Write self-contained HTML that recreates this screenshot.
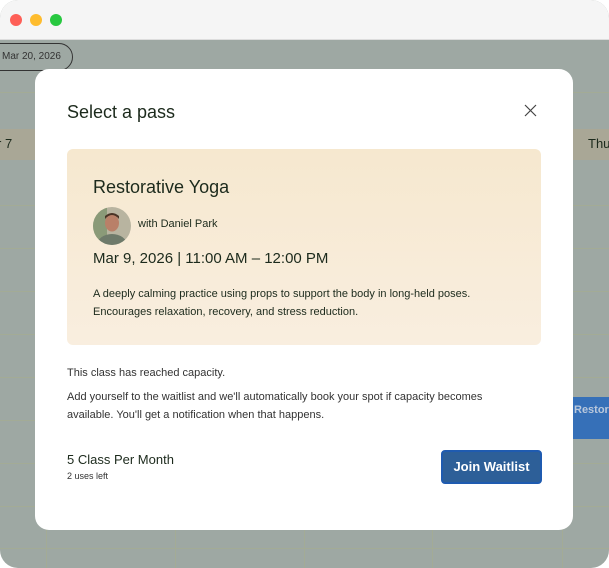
<!DOCTYPE html>
<html><head><meta charset="utf-8"><style>
*{box-sizing:border-box;margin:0;padding:0}
body{width:609px;height:568px;overflow:hidden;background:#fff;font-family:"Liberation Sans",sans-serif;position:relative}
.win{position:absolute;inset:0;border-radius:18px;overflow:hidden;background:#9ea8a3}
.top{position:absolute;left:0;top:0;width:609px;height:40px;background:#f5f5f5;border-bottom:1px solid #ddd}
.dot{position:absolute;top:14px;width:12px;height:12px;border-radius:50%}
.hl{position:absolute;left:0;width:609px;height:1px;background:#a3ab96}
.vl{position:absolute;top:506px;height:62px;width:1px;background:#a3ab96}
.band{position:absolute;left:0;top:129px;width:609px;height:31px;background:#a9a796}
.pill{position:absolute;left:-20px;top:43px;width:93px;height:28px;border:1px solid #333;border-radius:14px;font-size:10px;color:#333;line-height:26px;padding-left:21px}
.modal{position:absolute;left:35px;top:69px;width:538px;height:461px;background:#fff;border-radius:14px}
.card{position:absolute;left:32px;top:80px;width:474px;height:196px;border-radius:6px;background:linear-gradient(180deg,#f6e8cf,#f9eedf)}
.t{position:absolute;white-space:nowrap;color:#1c2a1c}
.btn{position:absolute;left:406px;top:381px;width:101px;height:34px;background:#2d5f98;border:2px solid #1f5bb0;border-radius:4px;color:#fff;font-size:13px;font-weight:bold;text-align:center;line-height:30px}
</style></head><body>
<div class="win">
<div class="top"></div>
<div class="dot" style="left:10px;background:#fe5f57"></div>
<div class="dot" style="left:30px;background:#febc2e"></div>
<div class="dot" style="left:50px;background:#28c840"></div>
<div class="pill">Mar 20, 2026</div>
<div class="hl" style="top:92px"></div>
<div class="band"></div>
<div class="t" style="left:-3px;top:136px;font-size:13px">r 7</div>
<div class="t" style="left:588px;top:136px;font-size:13px">Thu</div>
<div class="hl" style="top:205px"></div><div class="hl" style="top:248px"></div><div class="hl" style="top:291px"></div><div class="hl" style="top:334px"></div><div class="hl" style="top:377px"></div><div class="hl" style="top:420px"></div><div class="hl" style="top:463px"></div><div class="hl" style="top:506px"></div><div class="hl" style="top:548px"></div>
<div class="vl" style="left:46px"></div><div class="vl" style="left:175px"></div><div class="vl" style="left:304px"></div><div class="vl" style="left:432px"></div><div class="vl" style="left:562px"></div>
<div style="position:absolute;left:570px;top:397px;width:39px;height:42px;background:#3670b8;color:#b9c8dc;font-size:11px;font-weight:bold;padding:7px 0 0 4px;white-space:nowrap;overflow:hidden">Restor</div>
<div class="modal">
<div class="t" style="left:32px;top:33px;font-size:18px">Select a pass</div>
<svg style="position:absolute;left:489px;top:35px" width="13" height="13" viewBox="0 0 13 13"><path d="M1 1L12 12M12 1L1 12" stroke="#444" stroke-width="1.2"/></svg>
<div class="card">
<div class="t" style="left:26px;top:28px;font-size:18px">Restorative Yoga</div>
<svg style="position:absolute;left:26px;top:58px" width="38" height="38" viewBox="0 0 38 38"><defs><clipPath id="c"><circle cx="19" cy="19" r="19"/></clipPath></defs><g clip-path="url(#c)"><rect width="38" height="38" fill="#b8b4a0"/><rect x="0" y="0" width="14" height="38" fill="#8a9a78"/><ellipse cx="19" cy="38" rx="15" ry="11" fill="#6e7a6a"/><ellipse cx="19" cy="16" rx="7" ry="8.5" fill="#b98068"/><path d="M12 12Q19 4 26 12L26 9Q19 3 12 9Z" fill="#4a3426"/></g></svg>
<div class="t" style="left:71px;top:69px;font-size:11px">with Daniel Park</div>
<div class="t" style="left:26px;top:101px;font-size:15px">Mar 9, 2026 | 11:00 AM – 12:00 PM</div>
<div class="t" style="left:26px;top:136px;font-size:11px;line-height:18px">A deeply calming practice using props to support the body in long-held poses.<br>Encourages relaxation, recovery, and stress reduction.</div>
</div>
<div class="t" style="left:32px;top:298px;font-size:11px;color:#333">This class has reached capacity.</div>
<div class="t" style="left:32px;top:319px;font-size:11px;line-height:18px;color:#333">Add yourself to the waitlist and we'll automatically book your spot if capacity becomes<br>available. You'll get a notification when that happens.</div>
<div class="t" style="left:32px;top:383px;font-size:13px">5 Class Per Month</div>
<div class="t" style="left:32px;top:402px;font-size:9px;color:#333">2 uses left</div>
<div class="btn">Join Waitlist</div>
</div>
</div>
</body></html>
